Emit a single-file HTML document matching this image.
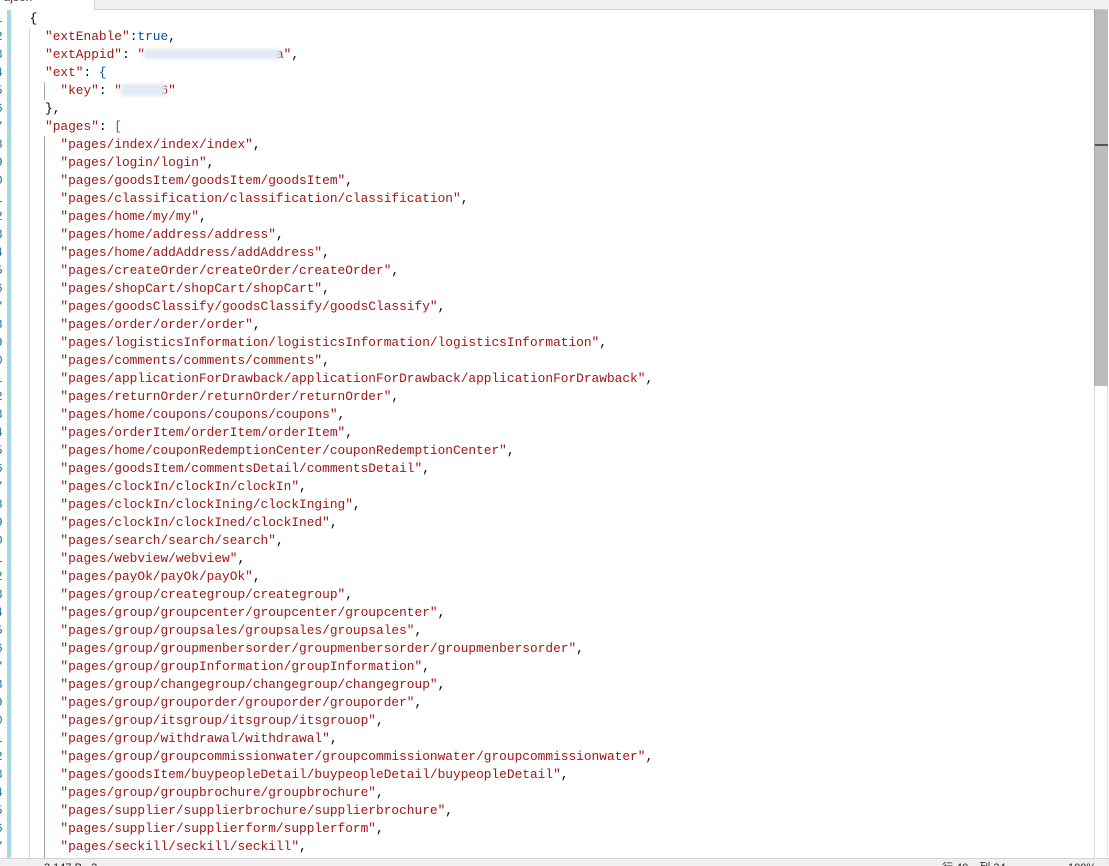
<!DOCTYPE html>
<html lang="en"><head><meta charset="utf-8"><title>app.json</title>
<style>
html,body{margin:0;padding:0;background:#fff;width:1109px;height:866px;overflow:hidden}
#page{position:relative;width:1109px;height:866px;overflow:hidden;font-family:"Liberation Mono",monospace;font-size:12.83px;color:#000}
.abs{position:absolute}
#top{left:94px;top:0;width:1015px;height:9px;background:#f1f1f1;border-bottom:1px solid #cfcfcf;border-left:1px solid #cfcfcf}
#tab{left:-3px;top:-10px;font:12px "Liberation Sans",sans-serif;color:#444;white-space:pre}
#x{left:72px;top:-10px;font:12px "Liberation Sans",sans-serif;color:#555}
#bar{left:7px;top:10px;width:4px;height:848px;background:#a6d8e6}
#g1{left:29px;top:28px;width:1px;height:830px;background:#d6d6d6}
.g2{left:44px;width:1px;background:#a8a8a8}
#sb{left:1094px;top:10px;width:14px;height:848px;border-left:1px solid #d8d8d8;border-right:1px solid #e6e6e6;box-sizing:border-box}
#th{left:1094px;top:10px;width:14px;height:376px;background:#bcbcbc;border-left:1px solid #a6a6a6;box-sizing:border-box}
#mk{left:1095px;top:144px;width:13px;height:2px;background:#555}
#st{left:0;top:858px;width:1109px;height:8px;background:#f0f0f0;border-top:1px solid #d4d4d4;box-sizing:border-box;overflow:hidden}
#st span{position:absolute;top:3px;font:11px/12px "Liberation Sans","Noto Sans CJK SC",sans-serif;color:#222;white-space:pre}
#ln{left:-5px;top:10px;width:12px;height:848px;overflow:hidden;color:#237893;line-height:18px}
#ln div{height:18px}
#code{left:29.6px;top:10px;width:1060px;height:848px;overflow:hidden;line-height:18px}
#code div{height:18px;white-space:pre}
.s{color:#a31515}.b{color:#0451a5}.o{color:#a0521d}.k{color:#000}
.blur{background:#e3eaf4;filter:blur(1.5px)}
</style></head><body><div id="page">
<div class="abs" id="tab">  ajson</div><div class="abs" id="x">×</div>
<div class="abs" id="top"></div>
<div class="abs" id="ln"><div>1</div><div>2</div><div>3</div><div>4</div><div>5</div><div>6</div><div>7</div><div>8</div><div>9</div><div>0</div><div>1</div><div>2</div><div>3</div><div>4</div><div>5</div><div>6</div><div>7</div><div>8</div><div>9</div><div>0</div><div>1</div><div>2</div><div>3</div><div>4</div><div>5</div><div>6</div><div>7</div><div>8</div><div>9</div><div>0</div><div>1</div><div>2</div><div>3</div><div>4</div><div>5</div><div>6</div><div>7</div><div>8</div><div>9</div><div>0</div><div>1</div><div>2</div><div>3</div><div>4</div><div>5</div><div>6</div><div>7</div></div>
<div class="abs" id="bar"></div>
<div class="abs" id="g1"></div>
<div class="abs g2" style="top:82px;height:18px"></div>
<div class="abs g2" style="top:136px;height:722px"></div>
<div class="abs" id="code"><div>{</div><div>  <span class="s">"extEnable"</span>:<span class="b">true</span>,</div><div>  <span class="s">"extAppid"</span>: <span class="s">"                 a"</span>,</div><div>  <span class="s">"ext"</span>: <span class="b">{</span></div><div>    <span class="s">"key"</span>: <span class="s">"     6"</span></div><div>  <span class="k">}</span>,</div><div>  <span class="s">"pages"</span>: <span class="o">[</span></div><div class="s">    "pages/index/index/index"<span class="k">,</span></div><div class="s">    "pages/login/login"<span class="k">,</span></div><div class="s">    "pages/goodsItem/goodsItem/goodsItem"<span class="k">,</span></div><div class="s">    "pages/classification/classification/classification"<span class="k">,</span></div><div class="s">    "pages/home/my/my"<span class="k">,</span></div><div class="s">    "pages/home/address/address"<span class="k">,</span></div><div class="s">    "pages/home/addAddress/addAddress"<span class="k">,</span></div><div class="s">    "pages/createOrder/createOrder/createOrder"<span class="k">,</span></div><div class="s">    "pages/shopCart/shopCart/shopCart"<span class="k">,</span></div><div class="s">    "pages/goodsClassify/goodsClassify/goodsClassify"<span class="k">,</span></div><div class="s">    "pages/order/order/order"<span class="k">,</span></div><div class="s">    "pages/logisticsInformation/logisticsInformation/logisticsInformation"<span class="k">,</span></div><div class="s">    "pages/comments/comments/comments"<span class="k">,</span></div><div class="s">    "pages/applicationForDrawback/applicationForDrawback/applicationForDrawback"<span class="k">,</span></div><div class="s">    "pages/returnOrder/returnOrder/returnOrder"<span class="k">,</span></div><div class="s">    "pages/home/coupons/coupons/coupons"<span class="k">,</span></div><div class="s">    "pages/orderItem/orderItem/orderItem"<span class="k">,</span></div><div class="s">    "pages/home/couponRedemptionCenter/couponRedemptionCenter"<span class="k">,</span></div><div class="s">    "pages/goodsItem/commentsDetail/commentsDetail"<span class="k">,</span></div><div class="s">    "pages/clockIn/clockIn/clockIn"<span class="k">,</span></div><div class="s">    "pages/clockIn/clockIning/clockInging"<span class="k">,</span></div><div class="s">    "pages/clockIn/clockIned/clockIned"<span class="k">,</span></div><div class="s">    "pages/search/search/search"<span class="k">,</span></div><div class="s">    "pages/webview/webview"<span class="k">,</span></div><div class="s">    "pages/payOk/payOk/payOk"<span class="k">,</span></div><div class="s">    "pages/group/creategroup/creategroup"<span class="k">,</span></div><div class="s">    "pages/group/groupcenter/groupcenter/groupcenter"<span class="k">,</span></div><div class="s">    "pages/group/groupsales/groupsales/groupsales"<span class="k">,</span></div><div class="s">    "pages/group/groupmenbersorder/groupmenbersorder/groupmenbersorder"<span class="k">,</span></div><div class="s">    "pages/group/groupInformation/groupInformation"<span class="k">,</span></div><div class="s">    "pages/group/changegroup/changegroup/changegroup"<span class="k">,</span></div><div class="s">    "pages/group/grouporder/grouporder/grouporder"<span class="k">,</span></div><div class="s">    "pages/group/itsgroup/itsgroup/itsgrouop"<span class="k">,</span></div><div class="s">    "pages/group/withdrawal/withdrawal"<span class="k">,</span></div><div class="s">    "pages/group/groupcommissionwater/groupcommissionwater/groupcommissionwater"<span class="k">,</span></div><div class="s">    "pages/goodsItem/buypeopleDetail/buypeopleDetail/buypeopleDetail"<span class="k">,</span></div><div class="s">    "pages/group/groupbrochure/groupbrochure"<span class="k">,</span></div><div class="s">    "pages/supplier/supplierbrochure/supplierbrochure"<span class="k">,</span></div><div class="s">    "pages/supplier/supplierform/supplerform"<span class="k">,</span></div><div class="s">    "pages/seckill/seckill/seckill"<span class="k">,</span></div></div>
<div class="abs blur" style="left:144px;top:49px;width:136px;height:10px"></div>
<div class="abs blur" style="left:121px;top:84px;width:44px;height:12px"></div>
<div class="abs" id="sb"></div>
<div class="abs" id="th"></div>
<div class="abs" id="mk"></div>
<div class="abs" id="st"><span style="left:44px">3,147 B   3 ⋯</span><span style="left:942px">行 40，列 34</span><span style="left:1068px">100%</span></div>
</div></body></html>
